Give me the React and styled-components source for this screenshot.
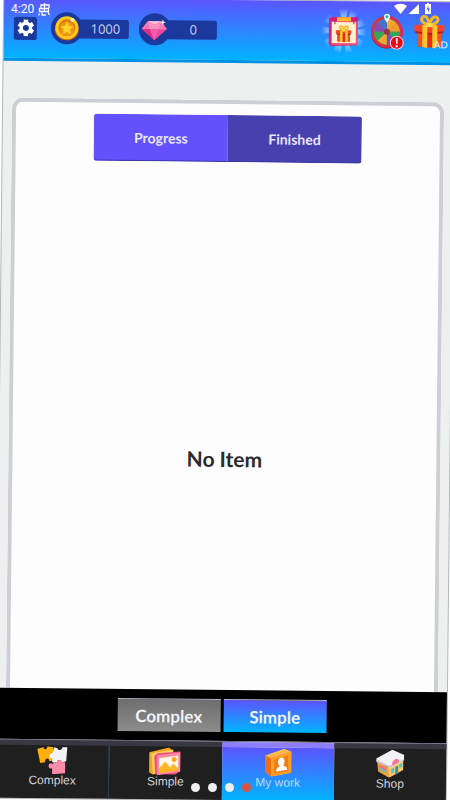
import React, { useState } from 'react';
import styled, { createGlobalStyle, css } from 'styled-components';

const App = () => {
  const [tab, setTab] = useState('Progress');
  const [kind, setKind] = useState('Simple');
  const [slide, setSlide] = useState(3);
  return (
    <Page>
      <GlobalStyle />
      <Screen>
        <Header>
          <SettingsButton type="button" aria-label="Settings">
            <GearIcon />
          </SettingsButton>
          <Balances>
            <Balance>
              <BalanceIcon>
                <CoinIcon />
              </BalanceIcon>
              <BalanceValue>1000</BalanceValue>
            </Balance>
            <Balance>
              <BalanceIcon>
                <DiamondIcon />
              </BalanceIcon>
              <BalanceValue>0</BalanceValue>
            </Balance>
          </Balances>
          <Bonuses>
            <BonusButton type="button" aria-label="Daily gift">
              <CalendarIcon />
            </BonusButton>
            <BonusButton type="button" aria-label="Lucky wheel">
              <WheelIcon />
            </BonusButton>
            <BonusButton type="button" aria-label="Gift">
              <GiftIcon />
              <AdLabel>AD</AdLabel>
            </BonusButton>
          </Bonuses>
        </Header>

        <Panel>
          <Tabs>
            {['Progress', 'Finished'].map(name => (
              <Tab
                key={name}
                type="button"
                $active={tab === name}
                onClick={() => setTab(name)}
              >
                {name}
              </Tab>
            ))}
          </Tabs>
          <Empty>No Item</Empty>
        </Panel>

        <KindBar>
          {['Complex', 'Simple'].map(name => (
            <KindButton
              key={name}
              type="button"
              $active={kind === name}
              onClick={() => setKind(name)}
            >
              {name}
            </KindButton>
          ))}
        </KindBar>

        <Nav>
          {navItems.map(({ name, Icon, active }) => (
            <NavLink key={name} href="#" $active={active}>
              <Icon />
              {name}
            </NavLink>
          ))}
        </Nav>
      </Screen>

      <StatusBar>
        <Clock>4:20</Clock>
        <DebugIcon />
        <StatusIcons />
      </StatusBar>
      <Dots>
        {[0, 1, 2, 3].map(index => (
          <Dot
            key={index}
            type="button"
            aria-label={`Slide ${index + 1}`}
            $active={slide === index}
            onClick={() => setSlide(index)}
          />
        ))}
      </Dots>
    </Page>
  );
};
export default App;

const GearIcon = () => (
  <svg width="18" height="18" viewBox="0 0 24 24">
    <g stroke="#fff" strokeWidth="6">
      <path d="M12 1v22M2.500 6.500l19 11M2.500 17.500l19-11" />
    </g>
    <circle cx="12" cy="12" r="8.500" fill="#fff" />
    <circle cx="12" cy="12" r="4" fill="#1b389c" />
  </svg>
);

const CoinIcon = () => (
  <svg width="26" height="26" viewBox="0 0 26 26">
    <ellipse cx="13" cy="14" rx="12" ry="11" fill="#d96c08" />
    <circle cx="13" cy="12.500" r="11.500" fill="#ffc91f" />
    <circle cx="13" cy="12.500" r="8.500" fill="#d97808" />
    <circle cx="13" cy="13.500" r="7.500" fill="#ef9610" />
    <path d="M13 6.500l2 4 4.500.6-3.300 3.100.8 4.500-4-2.100-4 2.100.8-4.500-3.300-3.100 4.500-.6z" fill="#ffd22e" />
    <circle cx="18.500" cy="4.500" r="2" fill="#fff3b8" />
  </svg>
);

const DiamondIcon = () => (
  <svg width="28" height="26" viewBox="0 0 28 26">
    <path d="M7 5h13l6 8-12.500 11L1 13z" fill="#f0479b" />
    <path d="M7 5h13l6 8H1z" fill="#f78fc0" />
    <path d="M7 5l2 8H1zM20 5l-2 8h8z" fill="#f277b4" />
    <path d="M7 5h13l-6.500 3z" fill="#fbc0dc" />
    <path d="M1 13h8l4.500 11z" fill="#d92f86" />
    <path d="M9 13h9l-4.500 11z" fill="#f55aac" />
    <path d="M22 3l.7 2.300L25 6l-2.300.7L22 9l-.7-2.300L19 6l2.300-.7z" fill="#fff" />
  </svg>
);

const Present = () => (
  <g>
    <path d="M3 14h24v17c-7 2-17 2-24 0z" fill="#e22f1c" />
    <path d="M3 14h6v18l-6-1zM22 14h5v17l-5 1z" fill="#f4502a" />
    <path d="M0 10l15-1 15 1v6l-15 2-15-2z" fill="#f54528" />
    <path d="M1 16l14 2 14-2v2l-14 2-14-2z" fill="#b9201a" />
    <path d="M8 10h5v23l-5-1zM18 10h5v22l-5 1z" fill="#ffc52c" />
    <path d="M15 10C10 9 5 6 8 2c3-3 6 2 7 8 1-6 5-11 8-7 2 4-3 6-8 7z" fill="none" stroke="#f8b71c" strokeWidth="3" />
    <path d="M12 8h6v4h-6z" fill="#ffdc50" />
  </g>
);

const CalendarIcon = () => (
  <svg width="46" height="46" viewBox="0 0 46 46">
    <defs>
      <radialGradient id="rays" gradientUnits="userSpaceOnUse" cx="23" cy="23" r="23">
        <stop offset=".5" stopColor="#c4edff" stopOpacity=".8" />
        <stop offset="1" stopColor="#c4edff" stopOpacity="0" />
      </radialGradient>
    </defs>
    <path
      d="M23 23L18 0h9zM23 23L30 1l7 4zM23 23L41 10l4 7zM23 23l23-3v8zM23 23l21 10-5 7zM23 23l9 21-7 1zM23 23l-3 22-8-2zM23 23L6 40l-5-7zM23 23L0 26v-8zM23 23L3 13l5-7z"
      fill="url(#rays)"
    />
    <path d="M8 10l3-1h26v5l-1 23-26 1-2-2z" fill="#d61d74" />
    <path d="M10 13h27v24H10z" fill="#f04c78" />
    <path d="M11 14h24v21H11z" fill="#fff0d2" />
    <path d="M16 9h14v4H16z" fill="#ffb62b" />
    <path d="M14 12v4M33 12v4" stroke="#a92759" strokeWidth="1" />
    <g transform="translate(15 17) scale(.52)">
      <Present />
    </g>
  </svg>
);

const WheelIcon = () => (
  <svg width="34" height="36" viewBox="0 0 34 36">
    <circle cx="16" cy="19" r="16" fill="#a81c3d" />
    <circle cx="16" cy="18" r="16" fill="#d8304c" />
    <circle cx="16" cy="18" r="13" fill="#35a556" />
    <path d="M16 18V5a13 13 0 0 1 9 4z" fill="#f6a828" />
    <path d="M16 18l9-9a13 13 0 0 1 4 9z" fill="#f39a2c" />
    <path d="M16 18h13a13 13 0 0 1-4 9z" fill="#35a556" />
    <path d="M16 18l9 9a13 13 0 0 1-9 4z" fill="#7a4ac8" />
    <path d="M16 18v13a13 13 0 0 1-9-4z" fill="#f6a828" />
    <path d="M16 18H3a13 13 0 0 1 4-9z" fill="#8b48b6" />
    <path d="M16 18L7 9a13 13 0 0 1 9-4z" fill="#4672cf" />
    <circle cx="16" cy="18" r="3" fill="#96334a" />
    <path d="M16 9c-2-3-3-4-3-6a3 3 0 0 1 6 0c0 2-1 3-3 6z" fill="#f0faff" />
    <circle cx="16" cy="3" r="1.500" fill="#36a3c4" />
    <circle cx="26" cy="29" r="7" fill="#f5d8dc" />
    <circle cx="26" cy="29" r="6" fill="#e80b18" />
    <path d="M25 24.500h2l-.3 5.500h-1.400zM25 31.500h2v2h-2z" fill="#fff" />
  </svg>
);

const GiftIcon = () => (
  <svg width="31" height="34" viewBox="0 0 30 34">
    <Present />
  </svg>
);

const PuzzleIcon = () => (
  <svg width="32" height="28" viewBox="0 0 32 28">
    <path d="M1 3l6-2c0 3 4 3 4-1l6 1v5c3-1 4 4 0 4l1 4-5 1c0-4-5-3-4 1l-5 1z" fill="#ffae0c" />
    <path d="M18 1l3 1c1 3 5 2 5-1h5l-1 14-4 1c-1-3-5-3-5 0l-5 0v-4c-4 1-4-5 0-5z" fill="#f3f3f3" />
    <path d="M17 16h4c0-3 5-3 5 0h3v11l-13 1v-6c-4 2-5-5-1-5l2 1z" fill="#ff8ba8" />
  </svg>
);

const PhotosIcon = () => (
  <svg width="34" height="28" viewBox="0 0 34 28">
    <path d="M1 5L21 0l3 3-4 23-16 1-3-2z" fill="#f6a51c" />
    <path d="M3 6l22-4v20L5 27z" fill="#ffd15c" />
    <path d="M6 9l3-3 23-2v20l-5 3-20 0z" fill="#ee5580" />
    <path d="M9 8l23-3v19L9 28z" fill="#ff8aa6" />
    <path d="M11 11l19-3v14l-19 3z" fill="#fff6e8" />
    <path d="M11 21l6-7 5 6 3-4 5 5v2l-19 3z" fill="#ffb624" />
    <circle cx="26" cy="12" r="2.500" fill="#ffa21c" />
  </svg>
);

const MyWorkIcon = () => (
  <svg width="28" height="28" viewBox="0 0 28 28">
    <path d="M1 7L20 0l7 3v21L7 28l-6-5z" fill="#ffb84c" />
    <path d="M1 7l6 3v18l-6-5z" fill="#ef6f17" />
    <path d="M7 9l20-6v21L7 28z" fill="#ff9d2b" />
    <path d="M10 11l14-4v15l-14 3z" fill="#f37c18" />
    <path d="M12 23c0-4 2-4 4-5-3-2-3-8 1-9 4 0 4 5 2 8 2 0 4 1 4 4z" fill="#fff" />
  </svg>
);

const ShopIcon = () => (
  <svg width="28" height="28" viewBox="0 0 28 28">
    <path d="M1 12l12 6v10L2 22z" fill="#f1a03c" />
    <path d="M12 15l15-7v12l-14 8z" fill="#ffca69" />
    <path d="M0 9L16 0l12 5v5l-14 8-14-6z" fill="#f4f1f6" />
    <path d="M0 10l13 6 15-7v1l-14 8-14-6z" fill="#cfc6d8" />
    <path d="M16 13c1-4 6-6 7-2l-1 2-6 3z" fill="#f27896" />
    <path d="M3 15l7 3v3l-7-3z" fill="#ef6e8e" />
    <path d="M3 18l7 3v2l-7-3zM15 19l3-1v5l-3 1zM23 14l3-1v4l-3 1z" fill="#4fc3d4" />
    <path d="M19 17l3-1v8l-3 1z" fill="#3a93a3" />
  </svg>
);

const navItems = [
  { name: 'Complex', Icon: PuzzleIcon },
  { name: 'Simple', Icon: PhotosIcon },
  { name: 'My work', Icon: MyWorkIcon, active: true },
  { name: 'Shop', Icon: ShopIcon },
];

const DebugIcon = () => (
  <svg width="12" height="13" viewBox="0 0 12 13" fill="none" stroke="#fff" strokeWidth="1.300">
    <path d="M3 5V2h8v3M1.500 5.500h9v3h-9zM6.500 0v9M1 10.500v2M4 9.500v2.500h4M10 9.500l1.500 2.500" />
  </svg>
);

const StatusIcons = () => (
  <svg width="38" height="12" viewBox="0 0 38 12" fill="#fff">
    <path d="M0 3c4-3 9-3 13 0L6.500 11z" />
    <path d="M25 1v10H14.500z" />
    <path d="M31 1h2V0h2v1h2v10h-6V1z" />
    <path d="M34.500 2.500L32.500 6.500h1.500v3l2-4h-1.500z" fill="#5960ee" />
  </svg>
);

const GlobalStyle = createGlobalStyle`
  body {
    margin: 0;
    background: #fff;
    font-family: Lato, 'Open Sans', sans-serif;
  }
  button {
    padding: 0;
    border: 0;
    font-family: inherit;
    cursor: pointer;
  }
  svg {
    display: block;
    flex-shrink: 0;
  }
`;

const blueGradient = css`
  background: linear-gradient(#5b55ff, #00b4ff);
`;

const Page = styled.div`
  position: relative;
  overflow: hidden;
`;

const Screen = styled.div`
  display: flex;
  flex-direction: column;
  min-height: 100vh;
  background: #ecf1f0;
  box-shadow: 0 0 0 1px #b4b6b8;
  transform: rotate(0.6deg);
`;

const Header = styled.header`
  display: flex;
  align-items: center;
  box-sizing: border-box;
  height: 63px;
  padding: 0 9px 0 10px;
  border-bottom: 3px solid #0090e4;
  ${blueGradient}
`;

const SettingsButton = styled.button`
  display: flex;
  align-items: center;
  justify-content: center;
  width: 23px;
  height: 23px;
  border-radius: 2px;
  background: #1b389c;
`;

const Balances = styled.div`
  display: flex;
  gap: 10px;
  margin-left: 14px;
`;

const Balance = styled.div`
  display: flex;
  align-items: center;
`;

const BalanceIcon = styled.span`
  display: flex;
  align-items: center;
  justify-content: center;
  width: 32px;
  height: 32px;
  border-radius: 50%;
  background: #1b389c;
`;

const BalanceValue = styled.span`
  box-sizing: border-box;
  width: 50px;
  margin-left: -4px;
  padding-left: 3px;
  border-radius: 0 2px 2px 0;
  background: #1b389c;
  color: #c8d4f4;
  font: 13px/19px 'Open Sans', sans-serif;
  text-align: center;
`;

const Bonuses = styled.div`
  display: flex;
  align-items: center;
  gap: 9px;
  margin-left: auto;
`;

const BonusButton = styled.button`
  position: relative;
  background: none;

  &:first-child {
    margin-right: -5px;
  }
`;

const AdLabel = styled.span`
  position: absolute;
  right: -3px;
  bottom: -2px;
  color: #e4f2ff;
  font: 10px/12px 'Liberation Sans', sans-serif;
`;

const Panel = styled.main`
  display: flex;
  flex: 1;
  flex-direction: column;
  align-items: center;
  margin: 37px 9px 0;
  padding-top: 11px;
  border: 4px solid #cdced6;
  border-bottom: 0;
  border-radius: 11px 11px 0 0;
  background: #fdfdfd;
`;

const Tabs = styled.div`
  display: flex;
  width: 63%;
  overflow: hidden;
  border-radius: 3px;
`;

const Tab = styled.button`
  flex: 1;
  height: 47px;
  border-bottom: 1px solid #3d36a0;
  background: ${({ $active }) => ($active ? '#6251fc' : '#4740af')};
  color: #e9e6ff;
  font-size: 14px;
  font-weight: 700;
`;

const Empty = styled.p`
  display: flex;
  flex: 1;
  align-items: center;
  margin: 0;
  padding-top: 64px;
  color: #2b2b2d;
  font-size: 21px;
  font-weight: 700;
`;

const KindBar = styled.div`
  display: flex;
  justify-content: center;
  gap: 3px;
  padding: 9px 0;
  background: #000;
`;

const KindButton = styled.button`
  width: 103px;
  height: 33px;
  border-top: 1px solid #b5b5c8;
  background: linear-gradient(#6e6e6e, #8c8c8c);
  color: #f2f2f6;
  font-size: 17px;
  font-weight: 700;
  ${({ $active }) => $active && blueGradient}
`;

const Nav = styled.nav`
  display: flex;
  border-top: 1px solid #68687a;
`;

const NavLink = styled.a`
  display: flex;
  flex: 1;
  flex-direction: column;
  align-items: center;
  box-sizing: border-box;
  height: 58px;
  padding-top: 1px;
  border-top: 5px solid ${({ $active }) => ($active ? '#8d7dfb' : '#393742')};
  background: #1f1f1f;
  color: ${({ $active }) => ($active ? '#b8dcff' : '#d4d4d4')};
  font: 12px/12px 'Liberation Sans', sans-serif;
  text-decoration: none;
  ${({ $active }) => $active && blueGradient}

  &:first-child {
    border-right: 1px solid #2c4258;
  }
`;

const StatusBar = styled.div`
  position: absolute;
  top: 2px;
  left: 11px;
  right: 18px;
  display: flex;
  align-items: center;
  gap: 4px;

  svg:last-child {
    margin-left: auto;
  }
`;

const Clock = styled.span`
  color: #fff;
  font: 12px/14px Roboto, sans-serif;
`;

const Dots = styled.div`
  position: absolute;
  bottom: 8px;
  left: 0;
  right: 0;
  display: flex;
  justify-content: center;
  gap: 8px;
  padding-right: 9px;
`;

const Dot = styled.button`
  width: 9px;
  height: 9px;
  border-radius: 50%;
  background: ${({ $active }) => ($active ? '#dc5240' : '#eeeeee')};
`;
